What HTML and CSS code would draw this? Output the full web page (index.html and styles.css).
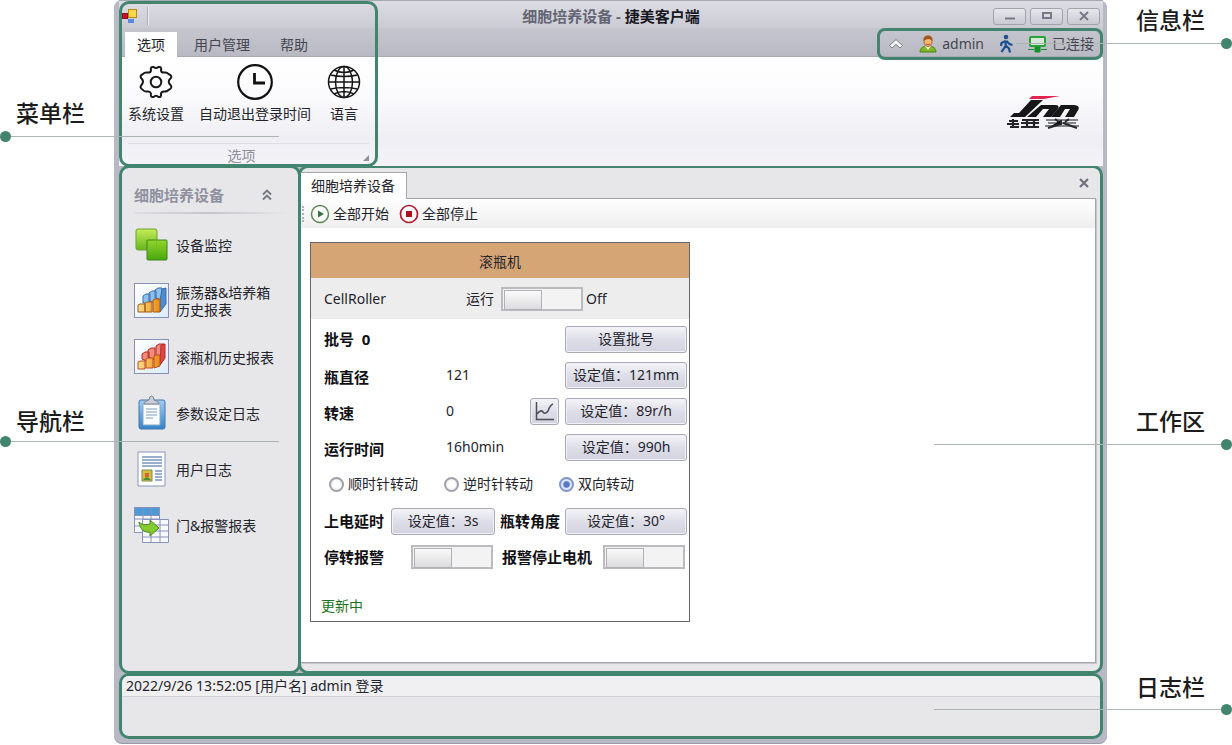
FILE: index.html
```html
<!DOCTYPE html>
<html lang="zh-CN">
<head>
<meta charset="utf-8">
<title>细胞培养设备 - 捷美客户端</title>
<link rel="stylesheet" href="styles.css">
</head>
<body>
<div class="page">
  <div class="window">
    <header class="top">
      <div class="titlebar">
        <div class="quick">
          <svg class="app-icon" width="16" height="16" viewBox="0 0 16 16">
            <rect x="0.5" y="5.500" width="5" height="5" fill="#c8102e" stroke="#8e0d22"/>
            <rect x="6.500" y="1.500" width="8" height="8" fill="#ffd54a" stroke="#b88a10"/>
            <rect x="6" y="11" width="6" height="4" fill="#5c86dd"/>
          </svg>
          <span class="quick-sep"></span>
        </div>
        <h1 class="title"><span class="title-doc">细胞培养设备 - </span>捷美客户端</h1>
        <div class="win-buttons">
          <button class="win-btn" aria-label="最小化"><svg width="12" height="10"><path d="M1 7.500h10" stroke="#777a86" stroke-width="2"/></svg></button>
          <button class="win-btn" aria-label="最大化"><svg width="12" height="10"><rect x="2" y="2" width="8" height="5" fill="none" stroke="#777a86" stroke-width="2"/></svg></button>
          <button class="win-btn" aria-label="关闭"><svg width="12" height="10"><path d="M2 1l8 8M10 1l-8 8" stroke="#777a86" stroke-width="2"/></svg></button>
        </div>
      </div>
      <div class="tabrow">
        <nav class="tabs">
          <button class="tab tab-active">选项</button>
          <button class="tab">用户管理</button>
          <button class="tab">帮助</button>
        </nav>
        <div class="info">
          <svg width="16" height="12" viewBox="0 0 16 12"><path d="M1.500 7.500L8 1.500l6.500 6-2.500 2.500-4-3.500-4 3.500z" fill="#f4f4f7" stroke="#7c7e88" stroke-linejoin="round"/></svg>
          <span class="info-item info-user">
            <svg width="18" height="18" viewBox="0 0 18 18">
              <path d="M1 17c0-4 3-6 8-6s8 2 8 6z" fill="#7cb62a" stroke="#4d8513"/>
              <path d="M6 11l3 4 3-4z" fill="#fff0d8"/>
              <ellipse cx="9" cy="6.500" rx="4" ry="5" fill="#f5b872" stroke="#a5652a"/>
              <path d="M4.500 6C4 2.500 6 .5 9 .5s5 2 4.500 5.500C12 5 11 4 10 4S6 4.500 4.500 6z" fill="#a4551f"/>
              <path d="M7 9q2 1.500 4 0" stroke="#c8452d" fill="none"/>
            </svg>
            <span>admin</span>
          </span>
          <svg width="14" height="20" viewBox="0 0 14 20"><circle cx="7" cy="3" r="2.300" fill="#1d4f93"/><path d="M7 6.500L6.500 12l-4 6M6.800 11.500l3.200 3 1 4M6.500 7L2.500 9 2 12M7.500 7l3 3 3 1" fill="none" stroke="#1d4f93" stroke-width="2.200"/></svg>
          <span class="info-item">
            <svg width="19" height="18" viewBox="0 0 19 18"><rect x="2" y="2" width="15" height="9" rx="1" fill="#d9e6dc" stroke="#27a43a" stroke-width="2"/><path d="M7 12h5v5H7zM0 14.500h6M13 14.500h6" fill="#159328" stroke="#159328"/></svg>
            <span>已连接</span>
          </span>
        </div>
      </div>
      <div class="ribbon">
        <section class="group">
          <div class="commands">
            <button class="command">
              <svg width="36" height="36" viewBox="0 0 36 36"><g fill="none" stroke="#191919" stroke-width="2" stroke-linejoin="round"><path d="M13 6.500Q12 2.500 15.500 3Q18 5 20.500 3Q24 2.500 23 6.500Q23.500 9 26.500 8.500Q29 8 30.500 10Q35 12 32.500 14.500Q29 17.500 32.500 21Q35 24 30.500 26Q28.500 28 26 27.500Q23 27.500 23 30Q23.500 33.500 20.500 33Q18 30.500 15.500 33Q12 33.500 13 29.500Q12 27 9.500 27.500Q6.500 28 5 26Q1 23.500 3.500 21Q6.500 17.500 3.500 14.500Q1 12 5 10Q6.500 8 9.500 8.500Q12.500 9 13 6.500z"/><circle cx="18" cy="18" r="5.300"/></g></svg>
              <span>系统设置</span>
            </button>
            <button class="command">
              <svg width="36" height="36" viewBox="0 0 36 36"><g fill="none" stroke="#111" stroke-width="2.200"><circle cx="18" cy="18" r="16.800"/><path d="M17.500 9v10H28" stroke-width="2.800"/></g></svg>
              <span>自动退出登录时间</span>
            </button>
            <button class="command">
              <svg width="36" height="36" viewBox="0 0 36 36"><g fill="none" stroke="#151515" stroke-width="1.500"><circle cx="18" cy="18" r="15.500"/><ellipse cx="18" cy="18" rx="8.500" ry="15.500"/><path d="M18 2.500v31M2.500 18h31M4.500 11q13.500 3 27 0M4.500 25q13.500-3 27 0M8 6q10 5 20 0M8 30q10-5 20 0"/></g></svg>
              <span>语言</span>
            </button>
          </div>
          <div class="group-title"><span>选项</span>
            <svg class="launcher" width="6" height="6"><path d="M6 0v6H0z" fill="#8f919a"/></svg>
          </div>
        </section>
        <svg class="brand" width="74" height="34" viewBox="0 0 74 34" role="img" aria-label="捷美">
          <path d="M22 4l3-3h28L37 4z" fill="#e0244f"/>
          <path d="M24 5h12L18 22H3l4-4h5z" fill="#17171a"/>
          <path d="M34 10h14q6 0 2 5l-6 7h-8l6-8h-6l-7 8h-9z" fill="#17171a"/>
          <path d="M54 10h12q9 0 4 7l-3 5h-9l5-8h-5l-5 8h-9z" fill="#17171a"/>
          <path d="M2 26h9M0 29h12M3 32h9M6 24v9M15 25h17M14 28h18M14 32h18M20 24v9M27 26v7" stroke="#252528" stroke-width="2.200"/>
          <path d="M39 25h32M41 28h28M38 31h34" stroke="#85868b" stroke-width="2"/>
          <path d="M48 24l4 3M62 24l-4 3M54 25v4l-13 4M56 28l14 5" stroke="#29292c" stroke-width="2"/>
        </svg>
      </div>
      <div class="menu-frame"></div>
    </header>

    <main class="main">
      <aside class="sidebar">
        <div class="side-head">
          <h2>细胞培养设备</h2>
          <button class="collapse" aria-label="折叠"><svg width="10" height="12" viewBox="0 0 10 12"><path d="M1 5.500l4-4 4 4M1 10.500l4-4 4 4" fill="none" stroke="#74767f" stroke-width="1.800"/></svg></button>
        </div>
        <button class="side-item">
          <svg width="36" height="36" viewBox="0 0 36 36"><defs><linearGradient id="leaf" x2="0" y2="1"><stop stop-color="#c5ec56"/><stop offset="1" stop-color="#67b61c"/></linearGradient><linearGradient id="leaf2" x2="0" y2="1"><stop stop-color="#94d52c"/><stop offset="1" stop-color="#47a80d"/></linearGradient></defs><rect x="2" y="2" width="21" height="21" rx="2" fill="url(#leaf)" stroke="#6ca535"/><rect x="13" y="13" width="20" height="20" rx="1" fill="url(#leaf2)" stroke="#3c871b"/><path d="M13.500 22.500h9v-9" fill="none" stroke="#72bd2b"/></svg>
          <span>设备监控</span>
        </button>
        <button class="side-item">
          <svg width="36" height="36" viewBox="0 0 36 36"><defs><linearGradient id="paper" x2="1" y2="1"><stop stop-color="#fff"/><stop offset="1" stop-color="#dcecfc"/></linearGradient><linearGradient id="gold" x2="1"><stop stop-color="#ffe08a"/><stop offset="1" stop-color="#e78a16"/></linearGradient></defs><rect x=".5" y=".5" width="34" height="34" fill="url(#paper)" stroke="#8890b5"/><g stroke="#3b6fae" fill="#8fc0ee"><path d="M9 20v-7l3-2h4v10zM15 18v-8l3-2h4v12zM21 15V7l3-2h4v12z"/><path d="M28 6l4-1v16l-6 8V18z" fill="#4f8bd0"/></g><g fill="url(#gold)" stroke="#a55a12"><path d="M4 22l2-1h5v8H4zM11 20l2-1h5v10h-7zM19 17l2-1h5v13h-7z"/></g></svg>
          <span>振荡器&amp;培养箱<br>历史报表</span>
        </button>
        <button class="side-item">
          <svg width="36" height="36" viewBox="0 0 36 36"><rect x=".5" y=".5" width="34" height="34" fill="url(#paper)" stroke="#8890b5"/><g stroke="#b32a2a" fill="#f28b7d"><path d="M8 20v-5l3-2h4v10zM14 18v-7l3-2h4v12zM22 15V7l3-2h5v15l-5 7z"/><path d="M27 6l4-1v14l-5 7z" fill="#e04444"/></g><g fill="url(#gold)" stroke="#c04a1d"><path d="M4 23l2-1h5v8H4zM12 20l2-1h5v10h-7zM20 17l2-1h4v11l-6 2z"/></g></svg>
          <span>滚瓶机历史报表</span>
        </button>
        <button class="side-item">
          <svg width="36" height="36" viewBox="0 0 36 36"><defs><linearGradient id="board" x2="0" y2="1"><stop stop-color="#a4cdf0"/><stop offset="1" stop-color="#3583c6"/></linearGradient></defs><rect x="5" y="5" width="26" height="29" rx="2" fill="url(#board)" stroke="#4076ac"/><path d="M9 9h17v21H9z" fill="#fbfdff" stroke="#8aa7c5"/><path d="M12 14h11M12 17h11M12 20h11M12 23h7" stroke="#7d9cc0"/><path d="M10 9q0-3 5-4 0-4 2.500-4T20 5q5 1 5 4z" fill="#c9ced8" stroke="#7e8594"/></svg>
          <span>参数设定日志</span>
        </button>
        <button class="side-item">
          <svg width="36" height="36" viewBox="0 0 36 36"><path d="M4 1h27v34H4z" fill="#fdfeff" stroke="#8c95bd"/><path d="M8 6h20M8 9h20M8 12h20M8 15h20M21 20h7M21 23h7M21 26h7M21 29h7" stroke="#7994bd" stroke-width="1.600"/><path d="M8 19h10v11H8z" fill="#d3bf3f" stroke="#798d4e"/><path d="M11 22h4v4h-4z" fill="#d96330"/><path d="M9 29l3-3 3 1 2 2z" fill="#568b36"/></svg>
          <span>用户日志</span>
        </button>
        <button class="side-item">
          <svg width="36" height="36" viewBox="0 0 36 36"><g stroke="#8792bb"><path d="M.5.500h25v25H.5z" fill="#f7f9ff"/><path d="M.5.500h25v8H.5z" fill="#4c9ad8"/><path d="M9 1v24M17 1v24M1 12h24M1 19h24" fill="none"/><path d="M8.500 12.500h26v23h-26z" fill="#f7f9ff"/><path d="M17 18v17M26 13v22M9 18h25M9 24h25M9 30h25" fill="none"/></g><path d="M5 15c3 3 7 3 11 2v-4l9 8-9 8v-4C10 26 6 22 5 15z" fill="#86ca32" stroke="#47861a"/></svg>
          <span>门&amp;报警报表</span>
        </button>
      </aside>

      <section class="work">
        <div class="doc-tabs">
          <button class="doc-tab">细胞培养设备</button>
          <button class="doc-close" aria-label="关闭标签"><svg width="12" height="10"><path d="M2 1l8 8M10 1l-8 8" stroke="#6e707c" stroke-width="2.200"/></svg></button>
        </div>
        <div class="doc">
          <div class="toolbar">
            <span class="grip"></span>
            <button class="tool"><svg width="20" height="20"><circle cx="10" cy="10" r="8.500" fill="#fafcf9" stroke="#61875a" stroke-width="1.500"/><path d="M8 6.500l6 3.500-6 3.500z" fill="#3b7047"/></svg><span>全部开始</span></button>
            <button class="tool"><svg width="20" height="20"><circle cx="10" cy="10" r="8.500" fill="#fffafa" stroke="#b01832" stroke-width="1.700"/><path d="M7 7h6v6H7z" fill="#a8121f"/></svg><span>全部停止</span></button>
          </div>
          <article class="card">
            <h3 class="card-head">滚瓶机</h3>
            <div class="card-sub">
              <span class="device">CellRoller</span>
              <label class="run-label" for="run">运行</label>
              <input class="switch" type="checkbox" role="switch" id="run">
              <span class="state">Off</span>
            </div>
            <div class="card-body">
              <div class="row"><span class="name">批号&nbsp; 0</span><span></span><span></span><button class="btn">设置批号</button></div>
              <div class="row"><span class="name name-low">瓶直径</span><span>121</span><span></span><button class="btn">设定值：121mm</button></div>
              <div class="row"><span class="name name-low">转速</span><span>0</span><button class="btn btn-chart" aria-label="曲线"><svg width="20" height="20" viewBox="0 0 20 20"><path d="M1.500 1v17.500H19" fill="none" stroke="#4b4d57" stroke-width="1.500"/><path d="M2 13q4-5 6-2t5-1q2-6 5-7" fill="none" stroke="#4b4d57" stroke-width="1.500"/></svg></button><button class="btn">设定值：89r/h</button></div>
              <div class="row"><span class="name name-low">运行时间</span><span>16h0min</span><span></span><button class="btn">设定值：990h</button></div>
              <div class="radios">
                <label><input class="radio" type="radio" name="dir"><span>顺时针转动</span></label>
                <label><input class="radio" type="radio" name="dir"><span>逆时针转动</span></label>
                <label><input class="radio" type="radio" name="dir" checked><span>双向转动</span></label>
              </div>
              <div class="pair">
                <span class="name">上电延时</span><button class="btn">设定值：3s</button>
                <span class="name">瓶转角度</span><button class="btn">设定值：30°</button>
              </div>
              <div class="alarms">
                <label class="name" for="stall">停转报警</label><input class="switch" type="checkbox" role="switch" id="stall">
                <label class="name" for="halt">报警停止电机</label><input class="switch" type="checkbox" role="switch" id="halt">
              </div>
            </div>
            <p class="status">更新中</p>
          </article>
        </div>
      </section>
    </main>

    <footer class="log">
      <p class="log-line">2022/9/26 13:52:05 [用户名] admin 登录</p>
    </footer>
  </div>

  <div class="callout callout-left callout-menu">菜单栏</div>
  <div class="callout callout-left callout-nav">导航栏</div>
  <div class="callout callout-right callout-info">信息栏</div>
  <div class="callout callout-right callout-work">工作区</div>
  <div class="callout callout-right callout-log">日志栏</div>
</div>
</body>
</html>
```
FILE: styles.css
```css
* { box-sizing: border-box; }

:root {
  --frame: #43846e;
  --ink: #24242c;
  --panel: #e7e7e9;
}

body {
  margin: 0;
  background: #fff;
  color: var(--ink);
  font: 14px/18px "Noto Sans", "Noto Sans CJK SC", sans-serif;
}

h1, h2, h3, p { margin: 0; }

button {
  padding: 0;
  border: 0;
  background: none;
  color: inherit;
  font: inherit;
}

svg { display: block; flex: none; }

.page {
  position: relative;
  display: flex;
  min-height: 100vh;
  padding: 0 125px 2px 114px;
}

.window {
  flex: 1;
  display: flex;
  flex-direction: column;
  border: solid #b9b9c6;
  border-width: 0 4px 4px 5px;
  border-radius: 8px;
  background: #b9b9c6;
  box-shadow: inset 0 1px #a5a5ae, 0 1px #9898a6;
}

/* Title bar and ribbon */
.top { position: relative; }

.titlebar {
  display: grid;
  grid-template-columns: 1fr auto 1fr;
  align-items: center;
  height: 28px;
  padding: 3px 3px 0 3px;
  border-top: 1px solid #a9a9b2;
  background: linear-gradient(#dcdce4, #cbcbd4);
}

.quick { display: flex; align-items: center; gap: 9px; }
.quick-sep { width: 2px; height: 18px; border-left: 1px solid #aeaeb8; background: #eeeef3; }

.title { color: #17171f; font-size: 15px; font-weight: 700; }
.title-doc { color: #646573; }

.win-buttons { display: flex; justify-content: flex-end; gap: 4px; }
.win-btn {
  display: grid;
  place-items: center;
  width: 33px;
  height: 17px;
  border: 1px solid #a3a3ae;
  border-radius: 3px;
  background: linear-gradient(#e6e6ec, #cacad2);
}

.tabrow {
  display: flex;
  justify-content: space-between;
  height: 29px;
  border-bottom: 1px solid #a9a9b0;
  background: linear-gradient(#c6c6cf, #b9b9c3);
}

.tabs { display: flex; gap: 2px; padding: 4px 0 0 6px; }
.tab { height: 25px; padding: 0 14px; color: #45464f; }
.tab-active { padding: 0 12px; margin-right: 1px; background: #fff; color: var(--ink); }

.info {
  position: relative;
  display: flex;
  align-items: center;
  gap: 15px;
  height: 32px;
  padding: 0 6px 0 8px;
  border: 3px solid var(--frame);
  border-radius: 8px;
  color: #45464f;
}
.info-item { display: flex; align-items: center; gap: 5px; }

.ribbon {
  display: flex;
  justify-content: space-between;
  height: 109px;
  background: linear-gradient(#fff 0%, #fbfbfd 35%, #eeeef4 75%, #f3f3f8 100%);
}

.group { display: flex; flex-direction: column; width: 256px; padding: 7px 6px 0 9px; }
.commands { display: flex; gap: 15px; }
.command { display: flex; flex-direction: column; align-items: center; gap: 5px; height: 66px; }

.group-title {
  position: relative;
  margin-top: 13px;
  padding: 3px 14px 0 0;
  border-top: 1px solid #e0e0e6;
  color: #8e909a;
  text-align: center;
}
.launcher { position: absolute; right: 0; bottom: 4px; }

.brand { margin: 38px 22px 0 0; }

.menu-frame {
  position: absolute;
  inset: 1px auto -1px 0;
  width: 259px;
  border: 3px solid var(--frame);
  border-radius: 10px;
  pointer-events: none;
}

/* Navigation and work area */
.main { flex: 1; display: flex; margin-top: -1px; }

.sidebar {
  width: 182px;
  padding: 10px 12px;
  border: 3px solid var(--frame);
  border-radius: 10px;
  background: var(--panel);
}

.side-head {
  display: flex;
  justify-content: space-between;
  align-items: center;
  height: 36px;
  margin-bottom: 3px;
  padding-right: 14px;
  border-bottom: 2px solid;
  border-image: linear-gradient(90deg, #dedee3, #c4c4ca 50%, #e7e7e9) 1;
}
.side-head h2 { color: #8f919f; font-size: 15px; }

.side-item {
  display: flex;
  align-items: center;
  gap: 6px;
  width: 100%;
  height: 56px;
  line-height: 17px;
  text-align: left;
  white-space: nowrap;
}

.work {
  flex: 1;
  display: flex;
  flex-direction: column;
  margin-left: -3px;
  padding: 4px 4px 8px 0;
  border: 3px solid var(--frame);
  border-radius: 10px;
  background: var(--panel);
}

.doc-tabs { display: flex; justify-content: space-between; align-items: center; height: 26px; }
.doc-tab {
  position: relative;
  height: 27px;
  margin-bottom: -1px;
  padding: 0 11px 0 10px;
  border: solid #a7a8ae;
  border-width: 1px 1px 0 0;
  background: #fff;
}
.doc-close { padding: 0 6px 4px; }

.doc {
  flex: 1;
  border: solid #a4a5a9;
  border-width: 1px 1px 1px 0;
  background: #fff;
  box-shadow: 1px 1px #c6c7ca;
}

.toolbar {
  display: flex;
  align-items: center;
  gap: 10px;
  height: 29px;
  background: linear-gradient(#fff, #eeeeef);
}
.grip { width: 2px; height: 16px; margin: 0 -4px 0 1px; border-left: 2px dotted #b0b2ba; }
.tool { display: flex; align-items: center; gap: 3px; }

/* Device card */
.card {
  display: flex;
  flex-direction: column;
  width: 380px;
  min-height: 380px;
  margin: 14px 0 0 9px;
  border: 1px solid #64666e;
}

.card-head {
  height: 35px;
  background: #d6a576;
  font-size: 14px;
  font-weight: 400;
  line-height: 37px;
  text-align: center;
}

.card-sub {
  display: grid;
  grid-template-columns: 142px 35px 85px 1fr;
  align-items: center;
  height: 41px;
  padding-left: 13px;
  background: #ededee;
}

.switch {
  appearance: none;
  display: block;
  width: 82px;
  height: 24px;
  margin: 0;
  padding: 1px;
  border: 2px solid #bcbcc0;
  background: #f3f3f4;
}
.switch::before {
  content: "";
  display: block;
  width: 36px;
  height: 18px;
  border: 1px solid #b0b0b5;
  background: linear-gradient(#fafafa, #dcdcdf);
}

.card-body { padding: 2px 2px 0 13px; }

.row {
  display: grid;
  grid-template-columns: 122px 84px 35px 122px;
  align-items: center;
  height: 36px;
}
.name { color: #101014; font-size: 15px; font-weight: 700; white-space: nowrap; }
.name-low { padding-top: 4px; }

.btn {
  height: 27px;
  border: 1px solid #a9a9b8;
  border-radius: 3px;
  background: linear-gradient(#f4f4f8, #dedee8 50%, #d3d3e0);
  box-shadow: inset 0 0 0 1px #f0f0f6;
  white-space: nowrap;
}
.btn-chart { display: grid; place-items: center; width: 29px; }

.radios { display: grid; grid-template-columns: 115px 115px 1fr; align-items: center; height: 38px; padding-left: 5px; }
.radios label { display: flex; align-items: center; gap: 4px; }
.radio {
  appearance: none;
  width: 15px;
  height: 15px;
  margin: 0;
  border: 2px solid #a0a1a9;
  border-radius: 50%;
  background: radial-gradient(#fff 40%, #dcdce2);
}
.radio:checked { border-color: #8296c6; background: radial-gradient(#5479c8 35%, #dbe5fb 50%); }

.pair { display: grid; grid-template-columns: 67px 104px 70px 122px; align-items: center; height: 36px; }
.pair .name:nth-child(3) { padding-left: 5px; }

.alarms { display: grid; grid-template-columns: 87px 91px 101px 82px; align-items: center; height: 36px; }

.status { margin-top: 22px; padding-left: 10px; color: #1c7321; }

/* Log */
.log {
  min-height: 66px;
  margin-top: -1px;
  border: 3px solid var(--frame);
  border-radius: 10px;
  background: var(--panel);
}
.log-line {
  height: 21px;
  padding-left: 4px;
  border-bottom: 1px solid #d2d2d7;
  border-radius: 7px 7px 0 0;
  background: #f0f0f2;
  line-height: 20px;
}

/* Annotations with leader lines over the window */
.callout {
  position: absolute;
  height: 41px;
  border-bottom: 1px solid #abb5b1;
  color: #1c1c1c;
  font-size: 23px;
  font-weight: 500;
  line-height: 34px;
}
.callout::after {
  content: "";
  position: absolute;
  bottom: -6px;
  width: 11px;
  height: 11px;
  border-radius: 50%;
  background: var(--frame);
}
.callout-left { left: 0; width: 279px; padding-left: 16px; }
.callout-left::after { left: 0; }
.callout-right { right: 0; padding-right: 27px; text-align: right; }
.callout-right::after { right: 0; }
.callout-menu { top: 96px; }
.callout-nav { top: 401px; line-height: 40px; }
.callout-info { top: 3px; width: 216px; }
.callout-work { top: 404px; width: 298px; }
.callout-log { top: 669px; width: 298px; line-height: 36px; }
```
